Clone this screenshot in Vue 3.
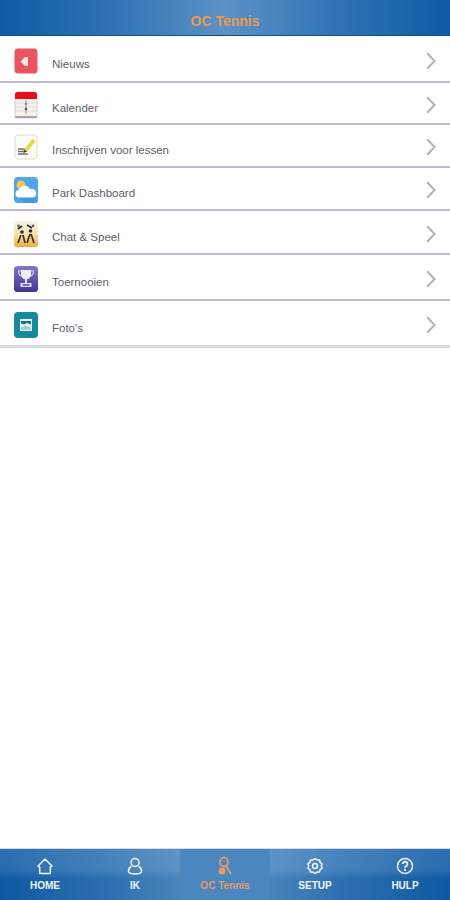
<template>
  <div class="screen">
    <header class="topbar">OC Tennis</header>

    <ul class="menu">
      <li v-for="item in items" :key="item.label" class="row" :style="{ height: item.height + 'px' }">
        <span class="icon">
          <svg v-if="item.icon === 'news'" viewBox="0 0 24 26" width="24" height="26">
            <rect x="0.5" y="0.5" width="23" height="25" rx="3.5" fill="#e8545f" />
            <path d="M6.500 13.500 11 9h3v9h-3z" fill="#fbe6e6" />
          </svg>
          <svg v-else-if="item.icon === 'calendar'" viewBox="0 0 24 28" width="24" height="28">
            <rect x="1" y="1" width="22" height="26" rx="2.500" fill="#f4f2ee" stroke="#c9c7c4" stroke-width="0.8" />
            <path d="M1 3.500A2.500 2.500 0 0 1 3.500 1h17A2.500 2.500 0 0 1 23 3.500V8H1z" fill="#e2111d" />
            <path d="M2 12h20M2 16h20M2 20h20" stroke="#dcdad6" stroke-width="0.8" />
            <path d="M12 9v14" stroke="#85837f" stroke-width="0.9" />
            <circle cx="12" cy="13" r="1.300" fill="#8f8d89" />
            <circle cx="12" cy="18" r="1.300" fill="#5e5c59" />
            <rect x="1" y="25" width="22" height="2" fill="#a9a7a3" />
          </svg>
          <svg v-else-if="item.icon === 'write'" viewBox="0 0 24 26" width="24" height="26">
            <rect x="1" y="1" width="22" height="24" rx="3" fill="#fcfcfa" stroke="#dedcd8" stroke-width="1" />
            <path d="M4 15h9M4 17.500h7M4 20h10" stroke="#6f7270" stroke-width="1.300" />
            <path d="M10 15.500 18.500 5l3 2.300-8.400 10.400-3.600 1z" fill="#e7dc35" />
            <path d="M10 15.500l3.100 2.200-3.600 1z" fill="#3c3c38" />
          </svg>
          <svg v-else-if="item.icon === 'weather'" viewBox="0 0 24 26" width="24" height="26">
            <rect width="24" height="26" rx="4" fill="#51a5ec" />
            <path d="M5 20h15l4 4a2 2 0 0 1-2 2H10z" fill="#3f8ed6" opacity="0.6" />
            <circle cx="7" cy="8" r="4.500" fill="#f5c84d" />
            <path d="M4.500 20.500a3.800 3.800 0 0 1 .4-7.500 6 6 0 0 1 11.200-.8 4.200 4.200 0 0 1 3.400 8.300z" fill="#fff" />
          </svg>
          <svg v-else-if="item.icon === 'chat'" viewBox="0 0 24 26" width="24" height="26">
            <defs>
              <linearGradient id="chatBg" x1="0" y1="0" x2="0" y2="1">
                <stop offset="0" stop-color="#f5f2e8" />
                <stop offset="0.5" stop-color="#f7e3b0" />
                <stop offset="1" stop-color="#eeab3a" />
              </linearGradient>
            </defs>
            <rect width="24" height="26" rx="3" fill="url(#chatBg)" />
            <path d="M4 8l4-3M13 4l5 3M7 14l-3 8M9 14l2 8M16 13l-3 9M17 13l3 9" stroke="#2c2a26" stroke-width="1.600" fill="none" />
            <circle cx="8" cy="11" r="1.800" fill="#2c2a26" />
            <circle cx="16.500" cy="10" r="1.800" fill="#2c2a26" />
            <circle cx="4.500" cy="5" r="1.400" fill="#6b6a66" />
            <circle cx="19" cy="5" r="1.400" fill="#6b6a66" />
          </svg>
          <svg v-else-if="item.icon === 'trophy'" viewBox="0 0 24 26" width="24" height="26">
            <defs>
              <linearGradient id="trophyBg" x1="0" y1="0" x2="0" y2="1">
                <stop offset="0" stop-color="#8379c8" />
                <stop offset="1" stop-color="#3f3493" />
              </linearGradient>
            </defs>
            <rect width="24" height="26" rx="3.500" fill="url(#trophyBg)" />
            <path d="M7 4h10v4.500a5 5 0 0 1-10 0z" fill="#eeedf6" />
            <path d="M7 5H4.500c0 3 1 4.500 3 5M17 5h2.500c0 3-1 4.500-3 5" stroke="#d6d3ea" stroke-width="1.200" fill="none" />
            <rect x="11" y="13" width="2" height="4" fill="#e6e4f2" />
            <path d="M6.500 17h11v4h-11z" fill="#e6e4f2" />
            <rect x="8.500" y="18.200" width="7" height="1.600" fill="#5c51a8" />
          </svg>
          <svg v-else viewBox="0 0 24 26" width="24" height="26">
            <rect width="24" height="26" rx="4" fill="#148a9c" />
            <rect x="6" y="7" width="12" height="12" fill="#e8f4f5" />
            <path d="M7 9h10v3.500L13 11l-3 1.500-3-1z" fill="#1d7484" />
            <path d="M7 15.500l4-2 6 2V18H7z" fill="#9fd1d8" />
          </svg>
        </span>
        <span class="label">{{ item.label }}</span>
        <svg class="chevron" viewBox="0 0 10 18" width="10" height="18">
          <path d="M1.200 1.200 8.600 9l-7.400 7.800" fill="none" stroke="#b3b3b3" stroke-width="2" />
        </svg>
      </li>
    </ul>

    <nav class="tabbar">
      <div v-for="tab in tabs" :key="tab.label" class="tab" :class="{ active: tab.active }">
        <svg viewBox="0 0 20 20" width="20" height="20" fill="none" stroke="currentColor" stroke-width="1.500">
          <path v-if="tab.icon === 'home'" d="M3 10 10 3l7 7-1.700 1v6.500H4.700V11z" stroke-linejoin="round" />
          <template v-else-if="tab.icon === 'user'">
            <circle cx="10" cy="6.500" r="4" />
            <path d="M6.500 10.500C4 11.500 3.500 13 3.500 15c0 2 2 3 6.500 3s6.500-1 6.500-3c0-2-.5-3.500-3-4.500" />
          </template>
          <template v-else-if="tab.icon === 'racket'">
            <ellipse cx="9" cy="6" rx="4" ry="4.500" stroke-width="1.800" />
            <path d="M11 10l5 8" stroke-width="1.800" />
            <circle cx="7" cy="15" r="3.500" fill="currentColor" stroke="none" />
          </template>
          <template v-else-if="tab.icon === 'gear'">
            <path d="M10 3l2 1.400 2.500 0 .6 2.500 2 1.500-.8 2.100.8 2.100-2 1.500-.6 2.500-2.500 0-2 1.400-2-1.400-2.500 0-.6-2.500-2-1.500.8-2.100-.8-2.100 2-1.500.6-2.500 2.500 0z" transform="translate(0 -.5)" stroke-linejoin="round" />
            <circle cx="10" cy="10" r="2.500" />
          </template>
          <template v-else>
            <circle cx="10" cy="10" r="7.500" />
            <path d="M7.800 8a2.300 2.300 0 1 1 3.300 2.100c-.7.400-1.100 1-1.100 1.700" stroke-width="1.800" />
            <path d="M10 13v2" stroke-width="1.800" />
          </template>
        </svg>
        <span>{{ tab.label }}</span>
      </div>
    </nav>
  </div>
</template>

<script setup>
const items = [
  { label: 'Nieuws', icon: 'news', height: 45 },
  { label: 'Kalender', icon: 'calendar', height: 42 },
  { label: 'Inschrijven voor lessen', icon: 'write', height: 43 },
  { label: 'Park Dashboard', icon: 'weather', height: 43 },
  { label: 'Chat & Speel', icon: 'chat', height: 44 },
  { label: 'Toernooien', icon: 'trophy', height: 46 },
  { label: "Foto's", icon: 'photo', height: 47 }
]

const tabs = [
  { label: 'HOME', icon: 'home' },
  { label: 'IK', icon: 'user' },
  { label: 'OC Tennis', icon: 'racket', active: true },
  { label: 'SETUP', icon: 'gear' },
  { label: 'HULP', icon: 'help' }
]
</script>

<style>
html,
body {
  background: #fff;
}
</style>

<style scoped>
.screen {
  width: 450px;
  height: 900px;
  display: flex;
  flex-direction: column;
  background: #fff;
  font-family: "Liberation Sans", Arial, sans-serif;
  overflow: hidden;
}

.topbar {
  height: 36px;
  flex: none;
  display: flex;
  align-items: center;
  justify-content: center;
  box-sizing: border-box;
  padding-top: 6px;
  color: #ed9a4c;
  font-size: 14px;
  font-weight: 700;
  background: linear-gradient(90deg, #0f5aa6 0%, #2f73b4 25%, #5c92c6 50%, #2f73b4 75%, #0f5aa6 100%);
  border-bottom: 1px solid #134f8f;
}

.menu {
  flex: 1;
  margin: 2px 0 0;
  padding: 0;
  list-style: none;
}

.row {
  display: flex;
  align-items: center;
  box-sizing: border-box;
  padding: 3px 12px 0 14px;
  border-bottom: 2px solid #b9bdd6;
}

.row:last-child {
  border-bottom: 3px solid #d8dae0;
}

.icon {
  width: 24px;
  height: 28px;
  flex: none;
  display: flex;
  align-items: center;
  justify-content: center;
}

.label {
  flex: 1;
  margin: 6px 0 0 14px;
  color: #5b6069;
  font-size: 11.500px;
}

.chevron {
  flex: none;
  margin-right: 2px;
}

.tabbar {
  height: 52px;
  flex: none;
  display: flex;
  border-top: 1px solid #d9d9de;
  box-sizing: border-box;
  background:
    linear-gradient(180deg, rgba(255, 255, 255, 0.12) 0, rgba(255, 255, 255, 0.1) 42%, rgba(0, 0, 0, 0.02) 58%, rgba(0, 0, 0, 0.02) 100%),
    linear-gradient(90deg, #0f5aa6 0%, #2f73b4 25%, #5c92c6 50%, #2f73b4 75%, #0f5aa6 100%);
}

.tab {
  flex: 1;
  display: flex;
  flex-direction: column;
  align-items: center;
  padding-top: 7px;
  gap: 4px;
  color: #f2f5fa;
  font-size: 10px;
  font-weight: 700;
}

.tab.active {
  color: #e89a68;
  background: #4a86c0;
}
</style>
